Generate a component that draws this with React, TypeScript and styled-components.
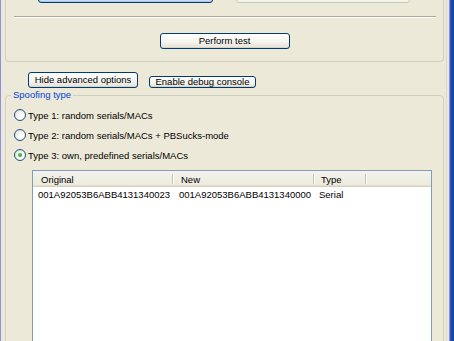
import React from 'react'
import styled, { createGlobalStyle, css } from 'styled-components'

const GlobalStyle = createGlobalStyle`
  html, body {
    margin: 0;
    padding: 0;
    background: #ece9d8;
  }
  body {
    font-family: "Liberation Sans", Arial, sans-serif;
    font-size: 9.5px;
    color: #000;
  }
`

const Window = styled.div`
  display: flex;
  width: 454px;
  height: 341px;
  overflow: hidden;
  background: #ece9d8;
`

const LeftFrame = styled.div`
  width: 1px;
  flex-shrink: 0;
  background: #8e8ee6;
`

const RightFrame = styled.div`
  display: flex;
  flex-shrink: 0;
`

const Stripe = styled.div<{ $w: number; $c: string }>`
  width: ${(p) => p.$w}px;
  background: ${(p) => p.$c};
`

const Content = styled.div`
  flex: 1;
  display: flex;
  flex-direction: column;
  padding: 0 2px 0 4px;
  min-width: 0;
`

const TopGroup = styled.div`
  display: flex;
  flex-direction: column;
  border: 1px solid #d0d0bf;
  border-top: none;
  border-radius: 0 0 4px 4px;
  padding-bottom: 12px;
`

const TopButtons = styled.div`
  display: flex;
  align-items: flex-end;
  gap: 23px;
  height: 3px;
  overflow: hidden;
  padding-left: 32px;
`

const Separator = styled.div`
  margin: 13px 7px 0 8px;
  border-top: 1px solid #aca899;
  border-bottom: 1px solid #fff;
`

type Variant = 'normal' | 'focused' | 'disabled'

const Button = styled.button<{ $w: number; $h?: number; $variant?: Variant }>`
  box-sizing: border-box;
  width: ${(p) => p.$w}px;
  height: ${(p) => p.$h ?? 16}px;
  flex-shrink: 0;
  padding: 0;
  font: inherit;
  line-height: 1;
  color: #000;
  border: 1px solid #003c74;
  border-radius: 3px;
  background: linear-gradient(#ffffff, #f6f5f0 55%, #e4e1d5);
  box-shadow: inset 0 -1px 0 #d8d3c6;
  ${(p) =>
    p.$variant === 'focused' &&
    css`
      box-shadow: inset 0 0 0 1px #a8c4ef, inset 0 0 0 2px #cfdcf5;
    `}
  ${(p) =>
    p.$variant === 'disabled' &&
    css`
      border-color: #c9c7ba;
      background: #f5f4ea;
      color: #aca899;
      box-shadow: none;
    `}
`

const PerformButton = styled(Button)`
  align-self: center;
  margin-top: 15px;
`

const OptionsRow = styled.div`
  display: flex;
  align-items: flex-end;
  gap: 11px;
  margin: 10px 0 0 23px;
`

const Fieldset = styled.fieldset`
  margin: 1px 0 0;
  padding: 0;
  min-width: 0;
  border: 1px solid #d0d0bf;
  border-radius: 4px;
  flex-shrink: 0;
`

const Legend = styled.legend`
  margin-left: 5px;
  padding: 0 2px;
  color: #0046d5;
  line-height: 12px;
`

const RadioList = styled.div`
  display: flex;
  flex-direction: column;
  padding: 4px 0 0 8px;
`

const RadioRow = styled.label`
  display: flex;
  align-items: center;
  gap: 2px;
  height: 20px;
`

const RadioCircle = styled.span<{ $checked?: boolean }>`
  box-sizing: border-box;
  width: 12px;
  height: 12px;
  border-radius: 50%;
  border: 1px solid #1c5180;
  background: radial-gradient(circle at 65% 65%, #ffffff 20%, #e6e4da 80%, #d4d1c4);
  display: flex;
  align-items: center;
  justify-content: center;
  &::after {
    content: '';
    display: ${(p) => (p.$checked ? 'block' : 'none')};
    width: 4px;
    height: 4px;
    border-radius: 50%;
    background: radial-gradient(circle at 35% 35%, #5fd35f, #21a121 70%);
  }
`

const ListView = styled.div`
  margin: 5px 0 0 26px;
  width: 400px;
  height: 200px;
  box-sizing: border-box;
  border: 1px solid #7f9db9;
  background: #fff;
`

const Header = styled.div`
  display: flex;
  align-items: center;
  height: 16px;
  background: linear-gradient(#f4f3ec, #ebeadb);
  box-shadow: inset 0 -1px 0 #d6d2c2, inset 0 -2px 0 #e2decd;
`

const HeaderCell = styled.div<{ $w: number; $pad: number }>`
  width: ${(p) => p.$w}px;
  padding-left: ${(p) => p.$pad}px;
  box-sizing: border-box;
  white-space: nowrap;
`

const HeaderDivider = styled.div`
  width: 0;
  height: 10px;
  border-left: 1px solid #c7c5b2;
  border-right: 1px solid #fff;
`

const Row = styled.div`
  display: flex;
  align-items: center;
  height: 14px;
`

const Cell = styled.div<{ $w?: number; $pad: number }>`
  ${(p) => (p.$w ? `width: ${p.$w}px;` : 'flex: 1;')}
  padding-left: ${(p) => p.$pad}px;
  box-sizing: border-box;
  white-space: nowrap;
`

const radios = [
  { label: 'Type 1: random serials/MACs', checked: false },
  { label: 'Type 2: random serials/MACs + PBSucks-mode', checked: false },
  { label: 'Type 3: own, predefined serials/MACs', checked: true },
]

const rows = [
  { original: '001A92053B6ABB4131340023', next: '001A92053B6ABB4131340000', type: 'Serial' },
]

const App = () => {
  return (
    <>
      <GlobalStyle />
      <Window>
        <LeftFrame />
        <Content>
          <TopGroup>
            <TopButtons>
              <Button $w={175} $variant="focused" />
              <Button $w={174} $variant="disabled" />
            </TopButtons>
            <Separator />
            <PerformButton $w={130}>Perform test</PerformButton>
          </TopGroup>

          <OptionsRow>
            <Button $w={110}>Hide advanced options</Button>
            <Button $w={107} $h={12}>
              Enable debug console
            </Button>
          </OptionsRow>

          <Fieldset>
            <Legend>Spoofing type</Legend>
            <RadioList>
              {radios.map((r) => (
                <RadioRow key={r.label}>
                  <RadioCircle $checked={r.checked} />
                  {r.label}
                </RadioRow>
              ))}
            </RadioList>
            <ListView>
              <Header>
                <HeaderCell $w={139} $pad={8}>Original</HeaderCell>
                <HeaderDivider />
                <HeaderCell $w={139} $pad={7}>New</HeaderCell>
                <HeaderDivider />
                <HeaderCell $w={50} $pad={6}>Type</HeaderCell>
                <HeaderDivider />
              </Header>
              {rows.map((r) => (
                <Row key={r.original}>
                  <Cell $w={141} $pad={5}>{r.original}</Cell>
                  <Cell $w={141} $pad={5}>{r.next}</Cell>
                  <Cell $pad={4}>{r.type}</Cell>
                </Row>
              ))}
            </ListView>
          </Fieldset>
        </Content>
        <RightFrame>
          <Stripe $w={1} $c="#dcd9c8" />
          <Stripe $w={2} $c="#ece9d8" />
          <Stripe $w={1} $c="#8a8ae6" />
          <Stripe $w={1} $c="#4b4bcf" />
          <Stripe $w={3} $c="#0b4ea2" />
        </RightFrame>
      </Window>
    </>
  )
}

export default App
